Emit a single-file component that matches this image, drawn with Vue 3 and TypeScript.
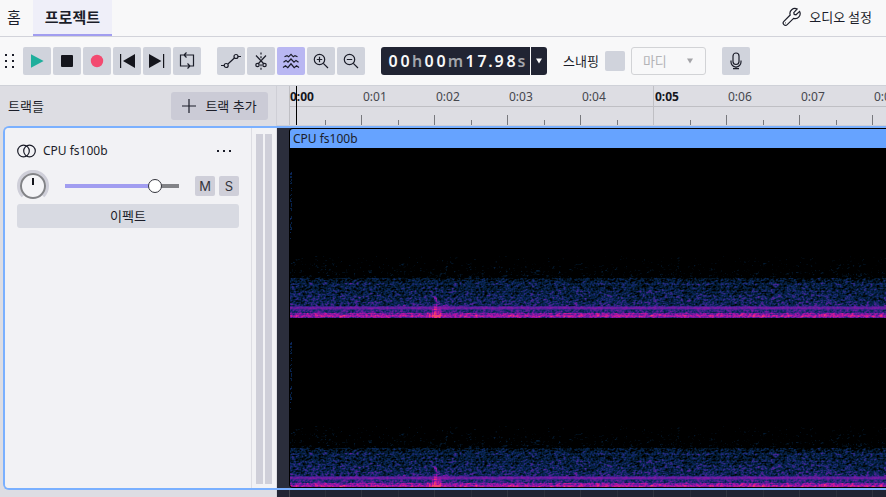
<script setup lang="ts">
import { nextTick, onBeforeUnmount, onMounted, ref } from 'vue'

interface TimeChar {
  text: string
  kind: 'digit' | 'unit' | 'wide' | 'point'
}

const time: TimeChar[] = [...'00h00m17.98s'].map((text) => ({
  text,
  kind: text === 'm' ? 'wide' : text === '.' ? 'point' : /\d/.test(text) ? 'digit' : 'unit',
}))

const seconds = Array.from({ length: 40 }, (_, n) => ({
  n,
  label: `${Math.floor(n / 60)}:${String(n % 60).padStart(2, '0')}`,
}))

const volume = ref(83)
const spectral = ref(true)
const snapping = ref(false)

const canvas = ref<HTMLCanvasElement | null>(null)
const CHANNEL = 170

function randomSource(seed: number): () => number {
  let s = seed
  return () => {
    s = (s + 0x6d2b79f5) | 0
    let t = Math.imul(s ^ (s >>> 15), 1 | s)
    t = (t + Math.imul(t ^ (t >>> 7), 61 | t)) ^ t
    return ((t ^ (t >>> 14)) >>> 0) / 4294967296
  }
}

// Level 0..1 to black, navy, indigo, purple, magenta, coral.
const stops: [number, number, number, number][] = [
  [0, 0, 0, 0],
  [0.16, 3, 24, 44],
  [0.32, 8, 38, 88],
  [0.46, 46, 38, 130],
  [0.62, 108, 26, 160],
  [0.78, 166, 20, 164],
  [0.9, 214, 30, 140],
  [1, 240, 66, 110],
]

function colour(level: number): [number, number, number] {
  const v = Math.max(0, Math.min(1, level))
  for (let i = 1; i < stops.length; i++) {
    const a = stops[i - 1]
    const b = stops[i]
    if (v <= b[0]) {
      const k = (v - a[0]) / (b[0] - a[0])
      return [a[1] + (b[1] - a[1]) * k, a[2] + (b[2] - a[2]) * k, a[3] + (b[3] - a[3]) * k]
    }
  }
  return [240, 66, 110]
}

// Mean level and spread for a row inside one channel.
function profile(y: number): [number, number] {
  if (y < 108) return [-1, 0]
  if (y < 130) return [-0.2 + (y - 108) * 0.005, 0.42]
  if (y === 158 || y === 161) return [0.5, 0.16]
  if (y === 159 || y === 160) return [0.62, 0.1]
  if (y < 158) {
    const band = y === 135 || y === 136 ? 0.1 : y === 143 ? 0.06 : 0
    return [0.13 + (y - 130) * 0.0075 + band, 0.4]
  }
  if (y < 165) return [0.44, 0.32]
  if (y < 167) return [0.66, 0.36]
  if (y < 169) return [0.78, 0.3]
  return [0.6, 0.36]
}

function draw() {
  const el = canvas.value
  if (!el) return
  const width = Math.max(1, el.clientWidth)
  el.width = width
  el.height = CHANNEL * 2
  const ctx = el.getContext('2d')
  if (!ctx) return
  const image = ctx.createImageData(width, CHANNEL * 2)
  const rnd = randomSource(71)
  const span = width + 2
  const field = Float32Array.from({ length: span * (CHANNEL + 1) }, () => rnd())
  for (let y = 0; y < CHANNEL; y++) {
    const [mean, spread] = profile(y)
    for (let x = 0; x < width; x++) {
      const at = y * span + x
      // Neighbouring bins leak into each other, more along time than frequency.
      const mixed =
        field[at] * 0.36 + field[at + 1] * 0.28 + field[at + 2] * 0.08 + field[at + span] * 0.18 + field[at + span + 1] * 0.1
      let level = mean + (mixed - 0.5) * spread * 1.9
      if (x < 2 && y > 16 && y < 92) level = mixed > 0.56 ? mixed * 0.42 : 0
      const d = x - 145
      if (y >= 149 && Math.abs(d) < 2) level += 0.22
      if (y >= 161 && d > -4 && d < 6) level += 0.24
      else if (y >= 153 && d >= 2 && d < 18) level += 0.12 * (1 - d / 24)
      const [r, g, b] = colour(level)
      for (let c = 0; c < 2; c++) {
        const i = ((c * CHANNEL + y) * width + x) * 4
        image.data[i] = r
        image.data[i + 1] = g
        image.data[i + 2] = b
        image.data[i + 3] = 255
      }
    }
  }
  ctx.putImageData(image, 0, 0)
}

onMounted(async () => {
  await nextTick()
  draw()
  window.addEventListener('resize', draw)
})
onBeforeUnmount(() => window.removeEventListener('resize', draw))
</script>

<template>
  <div class="app">
    <header class="top">
      <nav class="tabs">
        <a class="tab" href="#home">홈</a>
        <a class="tab current" href="#project">프로젝트</a>
      </nav>
      <button class="audio" type="button">
        <svg width="20" height="20" viewBox="0 0 20 20" class="line">
          <path d="M15.2 2 A5 5 0 0 0 8.2 8 L1.9 14.4 A2.3 2.3 0 0 0 5.2 17.7 L11.6 11.4 A5 5 0 0 0 17.6 4.4 L14 7.8 L12.2 7.4 L11.8 5.6 Z" />
          <path d="M3.4 15.9h.6" />
        </svg>
        <span>오디오 설정</span>
      </button>
    </header>

    <div class="toolbar" role="toolbar">
      <svg class="grip" width="10" height="16" viewBox="0 0 10 16">
        <g fill="#1b1d29">
          <rect x="0" y="1" width="2" height="2" /><rect x="7" y="1" width="2" height="2" />
          <rect x="0" y="7" width="2" height="2" /><rect x="7" y="7" width="2" height="2" />
          <rect x="0" y="13" width="2" height="2" /><rect x="7" y="13" width="2" height="2" />
        </g>
      </svg>

      <div class="group">
        <button class="tool" type="button" aria-label="재생">
          <svg width="28" height="28" viewBox="0 0 28 28"><path d="M8 7.2 L20.6 14 L8 20.8Z" fill="#1fae9c" /></svg>
        </button>
        <button class="tool" type="button" aria-label="정지">
          <svg width="28" height="28" viewBox="0 0 28 28"><rect x="8" y="8" width="12" height="12" rx="1" fill="#14151c" /></svg>
        </button>
        <button class="tool" type="button" aria-label="녹음">
          <svg width="28" height="28" viewBox="0 0 28 28"><circle cx="14" cy="14" r="6.2" fill="#f34a70" /></svg>
        </button>
        <button class="tool" type="button" aria-label="처음으로">
          <svg width="28" height="28" viewBox="0 0 28 28" fill="#14151c"><rect x="7" y="7" width="1.2" height="14" /><path d="M22 7 V21 L10 14Z" /></svg>
        </button>
        <button class="tool" type="button" aria-label="끝으로">
          <svg width="28" height="28" viewBox="0 0 28 28" fill="#14151c"><rect x="20" y="7" width="1.2" height="14" /><path d="M6 7 V21 L18.4 14Z" /></svg>
        </button>
        <button class="tool" type="button" aria-label="반복">
          <svg width="28" height="28" viewBox="0 0 28 28" class="line">
            <path d="M10.5 8 H7.5 V19 H17 M14.5 16.5 L17 19 L14.5 21.5 M17.5 19 H20.5 V8 H11 M13.5 5.5 L11 8 L13.5 10.5" />
          </svg>
        </button>
      </div>

      <div class="group">
        <button class="tool" type="button" aria-label="엔벨로프">
          <svg width="28" height="28" viewBox="0 0 28 28" class="line">
            <path d="M4 18.5h3.2M10.9 17 L17.4 11M20.9 9.5H24" /><circle cx="9.2" cy="18.5" r="2" /><circle cx="19" cy="9.5" r="2" />
          </svg>
        </button>
        <button class="tool" type="button" aria-label="분할">
          <svg width="28" height="28" viewBox="0 0 28 28" class="line">
            <path d="M9 8.5 L17 17M19 8.5 L11 17" /><circle cx="10.5" cy="18" r="1.7" /><circle cx="17.5" cy="18" r="1.7" />
            <path d="M14 5.5v2M14 9.2v2M14 17.2v2M14 20.8v2" />
          </svg>
        </button>
        <button class="tool" :class="{ on: spectral }" type="button" aria-label="스펙트럼" @click="spectral = !spectral">
          <svg width="28" height="28" viewBox="0 0 28 28" class="line">
            <path d="M7.5 9.8 L10 8.6 L11.6 9.8 L14 7.4 L16.3 9.8 L18 8.6 L20.5 9.8" />
            <path d="M6.5 15.2 L9 13.4 L11 15.2 L14 12 L17 15.2 L19 13.4 L21.5 15.2" />
            <path d="M6 20.6 L8.5 18.8 L10.8 20.6 L14 16.8 L17.2 20.6 L19.5 18.8 L22 20.6" />
          </svg>
        </button>
        <button class="tool" type="button" aria-label="확대">
          <svg width="28" height="28" viewBox="0 0 28 28" class="line">
            <circle cx="12.5" cy="12.5" r="5.2" /><path d="M16.3 16.3 L21 21M9.8 12.5h5.4M12.5 9.8v5.4" />
          </svg>
        </button>
        <button class="tool" type="button" aria-label="축소">
          <svg width="28" height="28" viewBox="0 0 28 28" class="line">
            <circle cx="12.5" cy="12.5" r="5.2" /><path d="M16.3 16.3 L21 21M9.8 12.5h5.4" />
          </svg>
        </button>
      </div>

      <div class="clock">
        <div class="time">
          <span v-for="(c, i) in time" :key="i" :class="c.kind">{{ c.text }}</span>
        </div>
        <button class="time-menu" type="button" aria-label="시간 형식">
          <svg width="6" height="6" viewBox="0 0 6 6"><path d="M0 .5H6L3 5.5Z" fill="#fff" /></svg>
        </button>
      </div>

      <div class="snap">
        <label for="snap">스내핑</label>
        <input id="snap" v-model="snapping" type="checkbox" />
        <div class="picker">
          <select aria-label="스내핑 단위" :disabled="!snapping">
            <option>마디</option>
          </select>
          <svg width="6" height="6" viewBox="0 0 6 6"><path d="M0 .5H6L3 5.5Z" fill="#a4a4a8" /></svg>
        </div>
      </div>

      <button class="tool" type="button" aria-label="마이크">
        <svg width="28" height="28" viewBox="0 0 28 28" class="line">
          <rect x="11" y="6" width="6" height="11.5" rx="3" />
          <path d="M9 13.5 V15 A5 5 0 0 0 19 15 V13.5M14 20v1.6M11 21.7h6" />
        </svg>
      </button>
    </div>

    <main class="project">
      <div class="heads">
        <div class="panel-head">
          <span>트랙들</span>
          <button class="add" type="button">
            <svg width="14" height="14" viewBox="0 0 14 14" class="line"><path d="M7 0v14M0 7h14" /></svg>
            트랙 추가
          </button>
        </div>
        <div class="ruler">
          <div v-for="s in seconds" :key="s.n" class="second" :class="{ major: s.n % 5 === 0, first: s.n === 0 }">
            <span>{{ s.label }}</span>
            <i></i>
          </div>
          <div class="playhead"></div>
        </div>
      </div>

      <section class="track">
        <div class="panel">
          <div class="controls">
            <div class="title">
              <svg width="20" height="14" viewBox="0 0 20 14" class="line"><circle cx="6.5" cy="7" r="5.8" /><circle cx="12.5" cy="7" r="5.8" /></svg>
              <span>CPU fs100b</span>
              <button type="button" class="more" aria-label="트랙 메뉴">
                <svg width="16" height="4" viewBox="0 0 16 4" fill="#1b1d29"><rect x="1" y="1" width="2" height="2" /><rect x="7" y="1" width="2" height="2" /><rect x="13" y="1" width="2" height="2" /></svg>
              </button>
            </div>
            <div class="mix">
              <svg class="knob" width="32" height="32" viewBox="0 0 32 32">
                <path d="M5.8 26.2 A14.5 14.5 0 1 1 26.2 26.2" fill="none" stroke="#cfcfd9" stroke-width="3" />
                <circle cx="16" cy="16" r="12" fill="#f4f4f7" stroke="#828387" stroke-width="2" />
                <path d="M16 8v7" stroke="#14151c" stroke-width="2" />
              </svg>
              <input
                v-model.number="volume" class="volume" type="range" min="0" max="100" aria-label="볼륨"
                :style="{ '--level': volume + '%' }"
              />
              <button type="button" class="small">M</button>
              <button type="button" class="small">S</button>
            </div>
            <button type="button" class="effects">이펙트</button>
          </div>
          <div class="meters"><i></i><i></i></div>
        </div>
        <div class="lane">
          <article class="clip">
            <h2>CPU fs100b</h2>
            <canvas ref="canvas"></canvas>
          </article>
        </div>
      </section>

      <div class="rest">
        <div class="rest-panel"></div>
        <div class="rest-lane"><i></i></div>
      </div>
    </main>
  </div>
</template>

<style>
body {
  margin: 0;
}
</style>

<style scoped>
* {
  box-sizing: border-box;
}
.app {
  display: flex;
  flex-direction: column;
  min-height: 100vh;
  overflow: hidden;
  background: #f8f8f9;
  color: #1b1d29;
  font: 13px/18px 'Noto Sans', 'Noto Sans CJK KR', sans-serif;
}
button,
select {
  padding: 0;
  border: 0;
  background: none;
  color: inherit;
  font: inherit;
}
svg {
  display: block;
  flex: none;
}
.line {
  fill: none;
  stroke: #1b1d29;
  stroke-width: 1.2;
}
.top {
  display: flex;
  justify-content: space-between;
  height: 37px;
  border-bottom: 1px solid #d2d3da;
  font-family: 'Noto Sans CJK KR', sans-serif;
}
.tabs {
  display: flex;
}
.tab {
  display: flex;
  align-items: center;
  padding: 0 12px 2px 7px;
  color: inherit;
  font-size: 15px;
  text-decoration: none;
}
.tab.current {
  padding: 0 12px;
  border-bottom: 2px solid #a19df0;
  background: #efeff9;
  font-weight: 700;
}
.audio {
  display: flex;
  align-items: center;
  gap: 7px;
  padding: 0 14px 2px 0;
}
.toolbar {
  display: flex;
  align-items: center;
  gap: 16px;
  height: 48px;
  padding-left: 5px;
}
.grip {
  margin-right: -8px;
}
.group {
  display: flex;
  gap: 2px;
}
.tool {
  width: 28px;
  height: 28px;
  border-radius: 2px;
  background: #d0d3dc;
}
.tool.on {
  background: #b9b7f2;
}
.clock {
  display: flex;
  gap: 1px;
  height: 28px;
  color: #f8f8f9;
}
.time {
  display: flex;
  align-items: center;
  width: 149px;
  padding-left: 6px;
  border-radius: 3px 0 0 3px;
  background: #212433;
  font-size: 16px;
  font-weight: 600;
}
.time span {
  display: flex;
  justify-content: center;
  width: 12px;
}
.time .wide {
  width: 17px;
}
.time .point {
  width: 5px;
}
.time .unit,
.time .wide {
  color: #a3a5ab;
}
.time .unit:last-child {
  width: 9px;
}
.time-menu {
  display: grid;
  place-items: center;
  width: 16px;
  border-radius: 0 3px 3px 0;
  background: #212433;
}
.snap {
  display: flex;
  align-items: center;
  gap: 6px;
}
.snap input {
  width: 20px;
  height: 20px;
  margin: 0;
  border-radius: 2px;
  background: #d0d3dc;
  appearance: none;
}
.picker {
  display: grid;
  align-items: center;
  width: 75px;
}
.picker > * {
  grid-area: 1 / 1;
}
.picker select {
  height: 28px;
  padding-left: 11px;
  border: 1px solid #d2d3d6;
  border-radius: 3px;
  color: #b3b3b6;
  opacity: 1;
  appearance: none;
}
.picker svg {
  justify-self: end;
  margin-right: 13px;
  pointer-events: none;
}
.project {
  display: flex;
  flex: 1;
  flex-direction: column;
  background: #dddde3;
}
.heads {
  display: flex;
  height: 41px;
  border-top: 1px solid #cfd1d8;
}
.panel-head {
  display: flex;
  flex: none;
  align-items: center;
  justify-content: space-between;
  width: 277px;
  padding: 0 8px;
  border-right: 1px solid #cfcfd6;
}
.add {
  display: flex;
  align-items: center;
  justify-content: center;
  gap: 9px;
  width: 97px;
  height: 28px;
  border-radius: 3px;
  background: #cbcbd6;
}
.ruler {
  position: relative;
  display: flex;
  flex: 1;
  min-width: 0;
  padding-left: 12px;
  overflow: hidden;
  border-bottom: 1px solid #cfcfd6;
}
.second {
  display: flex;
  flex: none;
  flex-direction: column;
  width: 73px;
  color: #46474e;
  font-size: 12px;
}
.second.first {
  width: 72px;
}
.second span {
  height: 21px;
  padding-left: 2px;
  border-bottom: 1px solid #bfbfc4;
  line-height: 22px;
}
.second i {
  flex: 1;
  background:
    linear-gradient(#77787d, #77787d) 0 100% / 1px 10px no-repeat,
    linear-gradient(#77787d, #77787d) 37px 100% / 1px 5px no-repeat;
}
.second.major {
  border-left: 1px solid #bfbfc4;
  color: #14151c;
  font-weight: 700;
}
.second.major span {
  padding-left: 1px;
}
.second.major i {
  background: linear-gradient(#77787d, #77787d) 36px 100% / 1px 5px no-repeat;
}
.second.first i {
  background-position: 35px 100%;
}
.second.first span {
  padding-left: 0;
}
.playhead {
  position: absolute;
  top: 0;
  bottom: 0;
  left: 19px;
  width: 1px;
  background: #000;
}
.track {
  display: flex;
  margin-left: 3px;
  overflow: hidden;
  border: 2px solid #7ab0ff;
  border-right: 0;
  border-radius: 6px 0 0 6px;
}
.panel {
  display: flex;
  flex: none;
  width: 272px;
  border-right: 1px solid #dddde3;
  background: #f2f2f5;
}
.controls {
  flex: 1;
  padding: 14px 12px;
}
.title {
  display: flex;
  align-items: center;
  gap: 6px;
  height: 18px;
  font-size: 12px;
}
.more {
  margin-left: auto;
  padding: 6px 7px;
}
.mix {
  display: flex;
  align-items: center;
  height: 32px;
  margin-top: 10px;
}
.volume {
  width: 114px;
  height: 16px;
  margin: 0 16px;
  border-radius: 2px;
  background: linear-gradient(90deg, #a19df0 var(--level), #828387 var(--level)) center / 100% 4px no-repeat;
  appearance: none;
}
.volume::-webkit-slider-thumb {
  width: 14px;
  height: 14px;
  border: 1px solid #33343c;
  border-radius: 50%;
  background: #fff;
  appearance: none;
}
.small {
  width: 20px;
  height: 20px;
  border-radius: 2px;
  background: #cfcfd9;
  font-family: Inter, sans-serif;
  font-weight: 400;
  color: #33343c;
}
.small + .small {
  margin-left: 4px;
}
.effects {
  width: 100%;
  height: 24px;
  margin-top: 2px;
  border-radius: 3px;
  background: #d8dae2;
}
.meters {
  display: flex;
  gap: 2px;
  padding: 6px 4px 4px;
  border-left: 1px solid #dddde3;
}
.meters i {
  width: 7px;
  background: #cfcfd9;
}
.lane {
  flex: 1;
  min-width: 0;
  padding-left: 12px;
  background: #2b2e3c;
}
.clip {
  overflow: hidden;
  border: 1px solid #000;
  border-right: 0;
  border-radius: 4px 0 0 4px;
  background: #000;
}
.clip h2 {
  height: 19px;
  margin: 0;
  padding-left: 3px;
  background: #66a3ff;
  font-size: 12px;
  font-weight: 400;
  line-height: 20px;
}
.clip canvas {
  display: block;
  width: 100%;
  height: 340px;
  margin-bottom: -1px;
}
.rest {
  display: flex;
  flex: 1;
}
.rest-panel {
  width: 277px;
  border-right: 1px solid #cfcfd6;
}
.rest-lane {
  display: flex;
  flex: 1;
  padding-left: 12px;
  background: #212433;
}
.rest-lane i {
  flex: 1;
  border-left: 1px solid #44474f;
  background:
    repeating-linear-gradient(90deg, transparent 0 71px, #30333f 71px 72px, transparent 72px 73px),
    repeating-linear-gradient(90deg, transparent 0 35px, #2b2e3b 35px 36px, transparent 36px 73px);
}
</style>
